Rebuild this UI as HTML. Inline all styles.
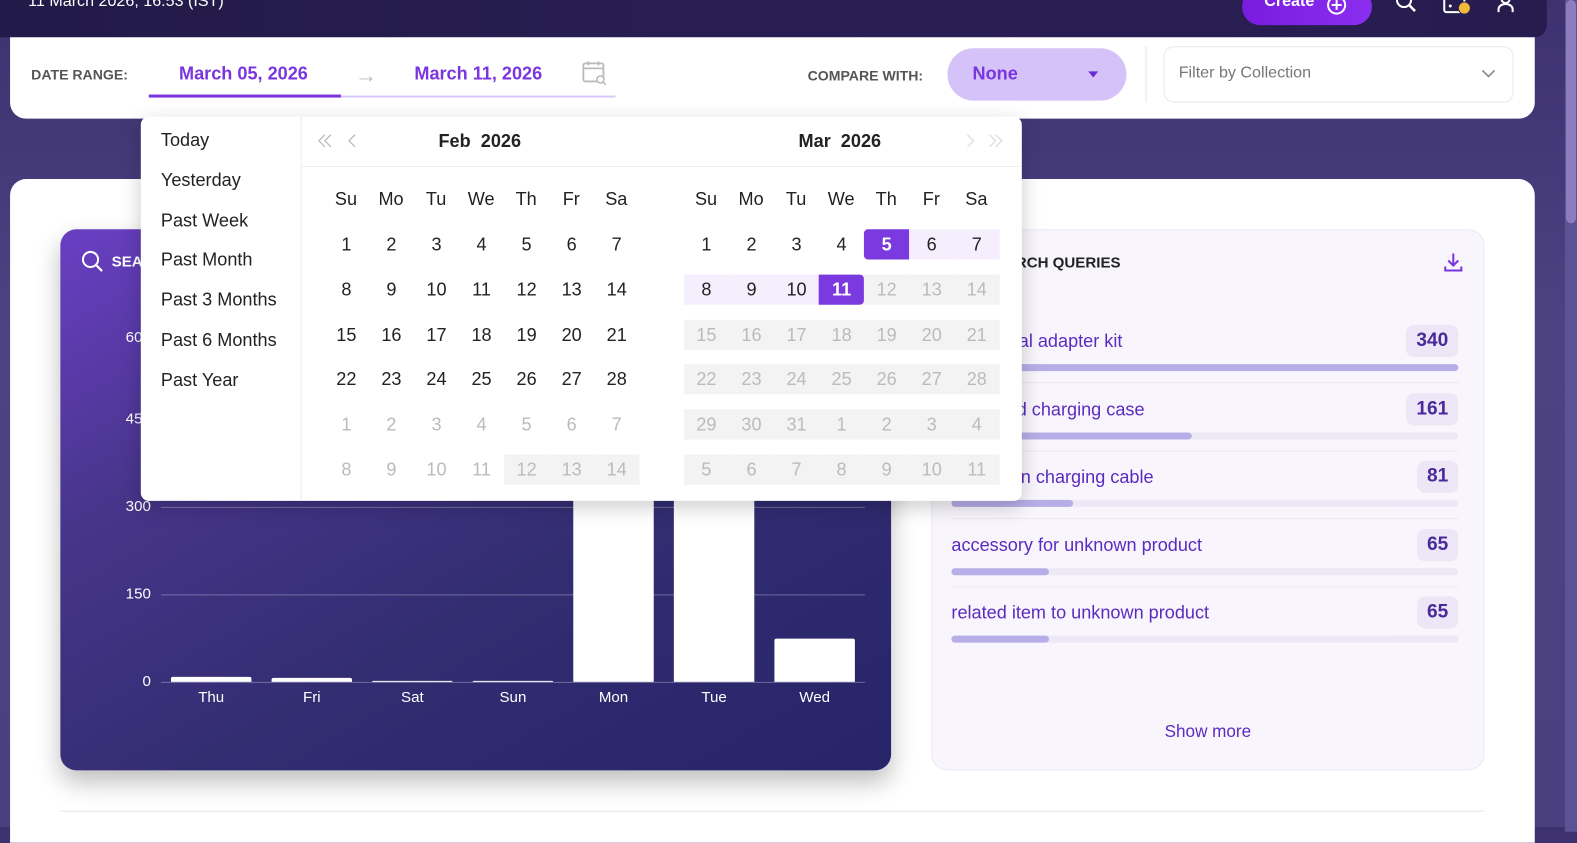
<!DOCTYPE html>
<html><head><meta charset="utf-8"><style>
*{box-sizing:border-box;margin:0;padding:0}
body{width:1577px;height:827px;overflow:hidden;position:relative;font-family:"Liberation Sans",sans-serif;background:linear-gradient(180deg,#3d3170 0%,#4d4382 40%,#4a4080 100%)}
#w{position:absolute;left:0;top:0;width:1568px;height:823px;transform:scale(1.00574);transform-origin:0 0}
.a{position:absolute}
.top{left:0;top:0;width:1538px;height:37px;background:linear-gradient(90deg,#221a48,#2a1f55 60%,#261c4e);border-bottom-right-radius:12px}
.sb{left:1556px;top:0;width:12px;height:827px;background:#5e5296}
.sbt{left:1557px;top:0;width:10px;height:222px;background:#8a7ec0;border-radius:5px}
.card1{left:10px;top:37px;width:1516px;height:81px;background:#fff;border-radius:0 0 16px 16px}
.card2{left:10px;top:178px;width:1516px;height:660px;background:#fff;border-radius:16px 16px 0 0}
.lbl{font-weight:bold;font-size:14px;color:#555}
.pd{color:#7a35e0;font-size:18px;font-weight:bold}
.chart{left:60px;top:228px;width:826px;height:538px;border-radius:16px;background:linear-gradient(150deg,#6a3fc4 0%,#47358a 30%,#332d72 60%,#27246a 100%);box-shadow:0 12px 24px rgba(0,0,0,.25)}
.gl{height:1px;background:rgba(255,255,255,.3);left:160px;width:700px}
.yl{color:#fff;font-size:15px;text-align:right;width:40px;left:110px}
.bar{background:#fff;width:80px;border-radius:2px 2px 0 0}
.xl{color:#fff;font-size:15px;width:80px;text-align:center}
.rp{left:926px;top:228px;width:550px;height:538px;background:#f8f6fc;border:1px solid #ebe7f3;border-radius:16px}
.q{color:#5b2bc0;font-size:18px;white-space:nowrap}
.badge{background:#ece6f7;color:#4a2a9a;font-weight:bold;font-size:19px;height:32px;line-height:32px;padding:0 10px;border-radius:8px;text-align:right}
.trk{left:946px;width:504px;height:7px;background:#ece8f6;border-radius:4px}
.fill{left:0;top:0;height:7px;background:#b7aee8;border-radius:4px}
.sep{left:946px;width:504px;height:1px;background:#ebe7f3}
.pop{left:140px;top:116px;width:876px;height:382px;background:#fff;border-radius:8px;box-shadow:0 6px 20px rgba(0,0,0,.2)}
.ps{font-size:18px;color:#222;left:160px}
.dn{font-size:18px;color:#222;width:44px;text-align:center}
.c{font-size:18px;width:44.8px;height:30px;line-height:30px;text-align:center;color:#222}
.g{color:#bbb}
.gb{background:#f3f3f3}
.rb{background:#f5effd}
.sel{background:#7a3ae0;color:#fff;font-weight:bold}
</style></head><body><div id="w">
<div class="a sb"></div><div class="a sbt"></div>
<div class="a top"></div>
<div class="a" style="left:28px;top:-7px;color:#fff;font-size:16px">11 March 2026, 16:53 (IST)</div>
<div class="a" style="left:1235px;top:-12px;width:129px;height:37px;border-radius:18px;background:linear-gradient(90deg,#7a1ce0,#8a2ef0)"></div>
<div class="a" style="left:1257px;top:-7px;color:#fff;font-size:16px;font-weight:bold">Create</div>
<svg class="a" style="left:1318px;top:-6px" width="22" height="22"><circle cx="11" cy="11" r="8.5" fill="none" stroke="#fff" stroke-width="2"/><path d="M11 6v10M6 11h10" stroke="#fff" stroke-width="2"/></svg>
<svg class="a" style="left:1384px;top:-6px" width="30" height="24"><circle cx="12" cy="6" r="7" fill="none" stroke="#fff" stroke-width="2"/><path d="M17 11l6 6" stroke="#fff" stroke-width="2.5"/></svg>
<svg class="a" style="left:1434px;top:-4px" width="30" height="22"><rect x="2" y="0" width="20" height="16" rx="2" fill="none" stroke="#fff" stroke-width="2"/><circle cx="8" cy="10" r="1.5" fill="#fff"/><circle cx="22" cy="12" r="6" fill="#f0b93a" stroke="#2a1f55" stroke-width="1"/></svg>
<svg class="a" style="left:1484px;top:-4px" width="26" height="20"><circle cx="13" cy="3" r="4" fill="none" stroke="#fff" stroke-width="2"/><path d="M6 16v-3a7 5 0 0 1 14 0v3" fill="none" stroke="#fff" stroke-width="2"/></svg>

<div class="a card1"></div>
<div class="a lbl" style="left:31px;top:66px">DATE RANGE:</div>
<div class="a pd" style="left:178px;top:63px">March 05, 2026</div>
<div class="a" style="left:353px;top:62px;color:#bbb;font-size:22px">→</div>
<div class="a pd" style="left:412px;top:63px">March 11, 2026</div>
<svg class="a" style="left:578px;top:59px" width="28" height="28"><rect x="2" y="4" width="20" height="18" rx="2" fill="none" stroke="#bbb" stroke-width="1.8"/><path d="M2 9h20M7 2v4M17 2v4" stroke="#bbb" stroke-width="1.8"/><circle cx="19" cy="20" r="3.5" fill="#fff" stroke="#bbb" stroke-width="1.6"/><path d="M21.5 22.5l3 3" stroke="#bbb" stroke-width="1.6"/></svg>
<div class="a" style="left:148px;top:95px;width:464px;height:2px;background:#d8c8f8"></div>
<div class="a" style="left:148px;top:94px;width:191px;height:3px;background:#7a35e0"></div>
<div class="a lbl" style="left:803px;top:67px">COMPARE WITH:</div>
<div class="a" style="left:942px;top:48px;width:178px;height:52px;border-radius:26px;background:#d4c2f8"></div>
<div class="a" style="left:967px;top:63px;color:#7a35e0;font-size:18px;font-weight:bold">None</div>
<div class="a" style="left:1082px;top:71px;width:0;height:0;border-left:5px solid transparent;border-right:5px solid transparent;border-top:6px solid #6a2bd0"></div>
<div class="a" style="left:1139px;top:46px;width:1px;height:56px;background:#e5e5e5"></div>
<div class="a" style="left:1157px;top:46px;width:348px;height:56px;border:1px solid #e8e8ee;border-radius:10px"></div>
<div class="a" style="left:1172px;top:64px;color:#777;font-size:16px">Filter by Collection</div>
<svg class="a" style="left:1472px;top:67px" width="16" height="12"><path d="M2 3l6 6 6-6" fill="none" stroke="#888" stroke-width="1.6"/></svg>

<div class="a card2"></div>
<div class="a chart"></div>
<svg class="a" style="left:80px;top:248px" width="24" height="24"><circle cx="10" cy="10" r="7.5" fill="none" stroke="#fff" stroke-width="2"/><path d="M15.5 15.5l6 6" stroke="#fff" stroke-width="2.2"/></svg>
<div class="a" style="left:111px;top:252px;color:#fff;font-weight:bold;font-size:15px">SEA</div>
<div class="a yl" style="top:327px">600</div>
<div class="a yl" style="top:408px">450</div>
<div class="a yl" style="top:495px">300</div>
<div class="a yl" style="top:582px">150</div>
<div class="a yl" style="top:669px">0</div>
<div class="a gl" style="top:504px"></div>
<div class="a gl" style="top:591px"></div>
<div class="a gl" style="top:678px"></div>
<div class="a bar" style="left:170px;top:673px;height:5px"></div>
<div class="a bar" style="left:270px;top:674px;height:4px"></div>
<div class="a bar" style="left:370px;top:677px;height:1px"></div>
<div class="a bar" style="left:470px;top:677px;height:1px"></div>
<div class="a bar" style="left:570px;top:480px;height:198px"></div>
<div class="a bar" style="left:670px;top:480px;height:198px"></div>
<div class="a bar" style="left:770px;top:635px;height:43px"></div>
<div class="a xl" style="left:170px;top:685px">Thu</div>
<div class="a xl" style="left:270px;top:685px">Fri</div>
<div class="a xl" style="left:370px;top:685px">Sat</div>
<div class="a xl" style="left:470px;top:685px">Sun</div>
<div class="a xl" style="left:570px;top:685px">Mon</div>
<div class="a xl" style="left:670px;top:685px">Tue</div>
<div class="a xl" style="left:770px;top:685px">Wed</div>

<div class="a rp"></div>
<div class="a" style="left:1010px;top:253px;font-weight:bold;font-size:15px;color:#222">RCH QUERIES</div>
<svg class="a" style="left:1434px;top:250px" width="22" height="22"><path d="M11 2v12M6 9l5 5 5-5M3 15v4h16v-4" fill="none" stroke="#7a35e0" stroke-width="2"/></svg>
<div class="a q" style="right:452px;top:329px">universal adapter kit</div><div class="a badge" style="right:118px;top:323px">340</div>
<div class="a trk" style="top:362px"><div class="a fill" style="width:504px"></div></div>
<div class="a sep" style="top:380px"></div>
<div class="a q" style="right:430px;top:397px">premium earbud charging case</div><div class="a badge" style="right:118px;top:391px">161</div>
<div class="a trk" style="top:430px"><div class="a fill" style="width:239px"></div></div>
<div class="a sep" style="top:448px"></div>
<div class="a q" style="right:421px;top:464px">premium nylon charging cable</div><div class="a badge" style="right:118px;top:458px">81</div>
<div class="a trk" style="top:497px"><div class="a fill" style="width:121px"></div></div>
<div class="a sep" style="top:515px"></div>
<div class="a q" style="left:946px;top:532px">accessory for unknown product</div><div class="a badge" style="right:118px;top:526px">65</div>
<div class="a trk" style="top:565px"><div class="a fill" style="width:97px"></div></div>
<div class="a sep" style="top:583px"></div>
<div class="a q" style="left:946px;top:599px">related item to unknown product</div><div class="a badge" style="right:118px;top:593px">65</div>
<div class="a trk" style="top:632px"><div class="a fill" style="width:97px"></div></div>
<div class="a" style="left:1158px;top:718px;color:#5b2bc0;font-size:17px">Show more</div>
<div class="a" style="left:60px;top:806px;width:1416px;height:1px;background:#e5e5e5"></div>

<div class="a" style="left:172px;top:108px;width:14px;height:14px;background:#fff;transform:rotate(45deg)"></div>
<div class="a pop"></div>
<div class="a" style="left:299px;top:116px;width:1px;height:382px;background:#eee"></div>
<div class="a" style="left:300px;top:165px;width:716px;height:1px;background:#eee"></div>
<div class="a ps" style="top:129px">Today</div>
<div class="a ps" style="top:169px">Yesterday</div>
<div class="a ps" style="top:209px">Past Week</div>
<div class="a ps" style="top:248px">Past Month</div>
<div class="a ps" style="top:288px">Past 3 Months</div>
<div class="a ps" style="top:328px">Past 6 Months</div>
<div class="a ps" style="top:368px">Past Year</div>
<svg class="a" style="left:315px;top:132px" width="44" height="16"><path d="M8 2l-6 6 6 6M14 2l-6 6 6 6M38 2l-6 6 6 6" fill="none" stroke="#bbb" stroke-width="1.3"/></svg>
<svg class="a" style="left:958px;top:132px" width="44" height="16"><path d="M4 2l6 6-6 6M26 2l6 6-6 6M32 2l6 6-6 6" fill="none" stroke="#ddd" stroke-width="1.3"/></svg>
<div class="a" style="left:436px;top:130px;font-weight:bold;font-size:18px;color:#222">Feb&nbsp; 2026</div>
<div class="a" style="left:794px;top:130px;font-weight:bold;font-size:18px;color:#222">Mar&nbsp; 2026</div>
<div id="cal"></div>
</div>
<script>
var h='';var cx1=322,cx2=680,w=44.8,tops=[228,273,318,362,407,452];
var dn=['Su','Mo','Tu','We','Th','Fr','Sa'];
dn.forEach(function(d,i){h+='<div class="a dn" style="left:'+(cx1+i*w)+'px;top:188px">'+d+'</div><div class="a dn" style="left:'+(cx2+i*w)+'px;top:188px">'+d+'</div>';});
for(var r=0;r<6;r++)for(var i=0;i<7;i++){
 var n=r*7+i+1,cls='c',t;
 if(n<=28)t=n;else{t=n-28;cls+=' g';if(n>=40)cls+=' gb';}
 h+='<div class="a '+cls+'" style="left:'+(cx1+i*w)+'px;top:'+tops[r]+'px">'+t+'</div>';
 var m=n,c2='c',t2;
 if(m<=31)t2=m;else t2=m-31;
 if(m>11)c2+=' g gb';
 if(m>=6&&m<=10)c2+=' rb';
 if(m==5||m==11)c2+=' sel';
 var br=m==5?'border-radius:4px 0 0 4px;':(m==11?'border-radius:0 4px 4px 0;':'');
 h+='<div class="a '+c2+'" style="left:'+(cx2+i*w)+'px;top:'+tops[r]+'px;'+br+'">'+t2+'</div>';
}
document.getElementById('cal').innerHTML=h;
</script>
</body></html>
